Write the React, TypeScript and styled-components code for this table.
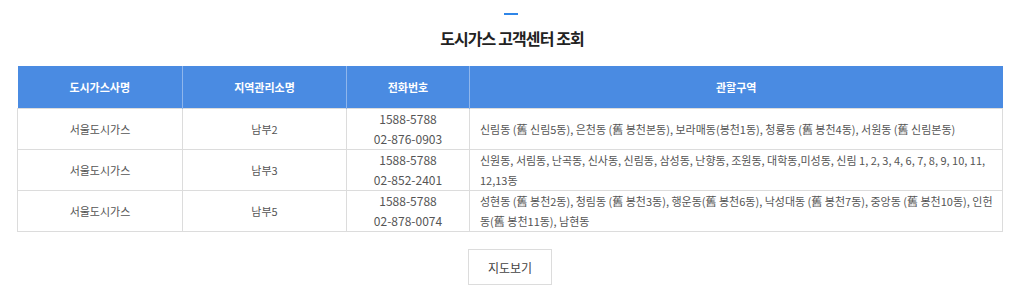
import styled, { createGlobalStyle } from "styled-components";

const GlobalStyle = createGlobalStyle`
  body {
    margin: 0;
    background: #ffffff;
    font-family: "Noto Sans CJK KR", "Noto Sans", sans-serif;
  }
`;

const Section = styled.section`
  width: 1024px;
  padding: 13px 0 0;
  display: flex;
  flex-direction: column;
  align-items: center;
`;

const Bar = styled.span`
  display: block;
  width: 14px;
  height: 2px;
  margin-right: 2px;
  background: #2f86e8;
`;

const Title = styled.h2`
  margin: 12px 0 0;
  font-size: 16px;
  font-weight: 700;
  letter-spacing: -0.9px;
  color: #222;
  line-height: 22px;
`;

const Table = styled.table`
  margin: 17px 4px 0 0;
  width: 986px;
  border-collapse: collapse;
  table-layout: fixed;
  font-size: 11px;
  color: #555;
`;

const Th = styled.th`
  height: 42px;
  padding: 0;
  background: #4a8be2;
  color: #ffffff;
  font-weight: 700;
  font-size: 11px;
  border-left: 1px solid #8fb6ec;
  &:first-child {
    border-left: 0;
  }
`;

const Td = styled.td<{ $left?: boolean }>`
  height: 40px;
  padding: ${(p) => (p.$left ? "0 3px 0 10px" : "0")};
  border: 1px solid #dcdcdc;
  text-align: ${(p) => (p.$left ? "left" : "center")};
  line-height: 20px;
  vertical-align: middle;
`;

const Phone = styled.span`
  display: block;
  font-size: 12px;
`;

const MapButton = styled.button`
  margin: 17px 4px 0 0;
  width: 84px;
  height: 36px;
  border: 1px solid #dcdcdc;
  background: #ffffff;
  font-family: inherit;
  font-size: 12px;
  color: #444;
`;

const rows = [
  {
    name: "서울도시가스",
    office: "남부2",
    phones: ["1588-5788", "02-876-0903"],
    area: "신림동 (舊 신림5동), 은천동 (舊 봉천본동), 보라매동(봉천1동), 청룡동 (舊 봉천4동), 서원동 (舊 신림본동)",
  },
  {
    name: "서울도시가스",
    office: "남부3",
    phones: ["1588-5788", "02-852-2401"],
    area: "신원동, 서림동, 난곡동, 신사동, 신림동, 삼성동, 난향동, 조원동, 대학동,미성동, 신림 1, 2, 3, 4, 6, 7, 8, 9, 10, 11, 12,13동",
  },
  {
    name: "서울도시가스",
    office: "남부5",
    phones: ["1588-5788", "02-878-0074"],
    area: "성현동 (舊 봉천2동), 청림동 (舊 봉천3동), 행운동(舊 봉천6동), 낙성대동 (舊 봉천7동), 중앙동 (舊 봉천10동), 인헌동(舊 봉천11동), 남현동",
  },
];

export default function App() {
  return (
    <>
      <GlobalStyle />
      <Section>
        <Bar />
        <Title>도시가스 고객센터 조회</Title>
        <Table>
          <colgroup>
            <col style={{ width: "165px" }} />
            <col style={{ width: "164px" }} />
            <col style={{ width: "123px" }} />
            <col />
          </colgroup>
          <thead>
            <tr>
              <Th>도시가스사명</Th>
              <Th>지역관리소명</Th>
              <Th>전화번호</Th>
              <Th>관할구역</Th>
            </tr>
          </thead>
          <tbody>
            {rows.map((r) => (
              <tr key={r.office}>
                <Td>{r.name}</Td>
                <Td>{r.office}</Td>
                <Td>
                  {r.phones.map((p) => (
                    <Phone key={p}>{p}</Phone>
                  ))}
                </Td>
                <Td $left>{r.area}</Td>
              </tr>
            ))}
          </tbody>
        </Table>
        <MapButton>지도보기</MapButton>
      </Section>
    </>
  );
}
